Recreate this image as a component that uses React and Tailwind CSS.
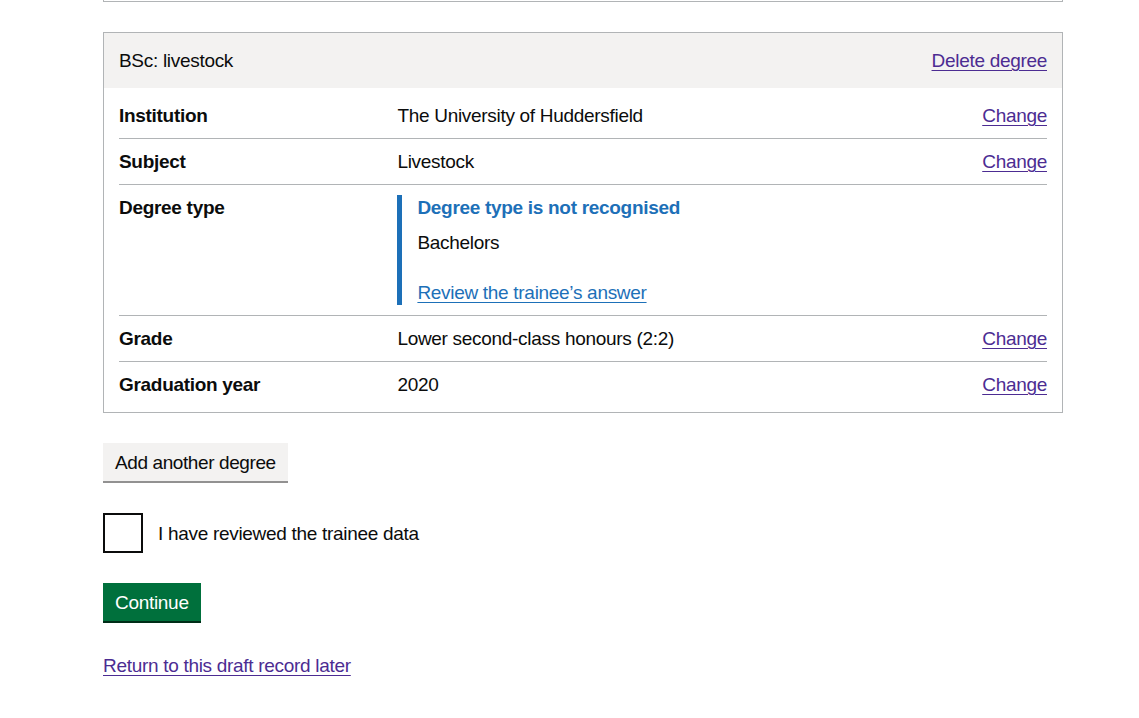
import React, { useState } from 'react';

const rows = [
    { key: 'Institution', value: 'The University of Huddersfield' },
    { key: 'Subject', value: 'Livestock' },
    { key: 'Degree type', issue: true },
    { key: 'Grade', value: 'Lower second-class honours (2:2)' },
    { key: 'Graduation year', value: '2020' },
];

function App() {
    const [checked, setChecked] = useState(false);

    return (
        <div className="min-h-screen bg-white text-[#0b0c0c] text-[19px] leading-[25px] tracking-[-0.3px] font-['Liberation_Sans',Arial,sans-serif]">
            <div className="ml-[103px] w-[960px]">
                {/* tail of the previous card */}
                <div className="h-[2px] border-x border-b border-[#b1b4b6]" />

                <div className="mt-[30px] border border-[#b1b4b6]">
                    <div className="bg-[#f3f2f1] px-[15px] py-[15px] flex items-center justify-between">
                        <h2 className="font-normal">BSc: livestock</h2>
                        <a href="#" className="text-[#4c2c92] underline underline-offset-[3px] decoration-1">Delete degree</a>
                    </div>

                    <dl className="px-[15px] pt-[15px] pb-[5px]">
                        {rows.map((row, i) => (
                            <div
                                key={row.key}
                                className={`flex ${i < rows.length - 1 ? 'border-b border-[#b1b4b6]' : ''} ${i === 0 ? 'pb-[10px]' : 'py-[10px]'}`}
                            >
                                <dt className="w-[30%] pr-[20px] font-bold">{row.key}</dt>
                                {row.issue ? (
                                    <dd className="w-[70%]">
                                        <div className="border-l-[5px] border-[#1d70b8] pl-[15px]">
                                            <p className="font-bold text-[#1d70b8]">Degree type is not recognised</p>
                                            <p className="mt-[10px]">Bachelors</p>
                                            <a href="#" className="block mt-[25px] text-[#1d70b8] underline underline-offset-[3px] decoration-1">
                                                Review the trainee’s answer
                                            </a>
                                        </div>
                                    </dd>
                                ) : (
                                    <>
                                        <dd className="w-[50%] pr-[20px]">{row.value}</dd>
                                        <dd className="w-[20%] text-right">
                                            <a href="#" className="text-[#4c2c92] underline underline-offset-[3px] decoration-1">Change</a>
                                        </dd>
                                    </>
                                )}
                            </div>
                        ))}
                    </dl>
                </div>

                <button className="mt-[30px] block bg-[#f3f2f1] text-[#0b0c0c] border-2 border-transparent px-[10px] pt-[6px] pb-[5px] leading-[23px] tracking-[-0.4px] shadow-[0_2px_0_#929191]">
                    Add another degree
                </button>

                <label className="mt-[32px] flex items-center gap-[13px] cursor-pointer">
                    <input
                        type="checkbox"
                        checked={checked}
                        onChange={(e) => setChecked(e.target.checked)}
                        className="sr-only"
                    />
                    <span className="w-[40px] h-[40px] border-2 border-[#0b0c0c] flex items-center justify-center">
                        {checked && <span className="w-[22px] h-[11px] border-l-[5px] border-b-[5px] border-[#0b0c0c] -rotate-45 -mt-[6px]" />}
                    </span>
                    <span className="pl-[2px]">I have reviewed the trainee data</span>
                </label>

                <button className="mt-[30px] block bg-[#00703c] text-white border-2 border-transparent px-[10px] pt-[6px] pb-[5px] leading-[23px] shadow-[0_2px_0_#002d18]">
                    Continue
                </button>

                <a href="#" className="mt-[32px] inline-block text-[#4c2c92] underline underline-offset-[3px] decoration-1">
                    Return to this draft record later
                </a>
            </div>
        </div>
    );
}

export default App;
